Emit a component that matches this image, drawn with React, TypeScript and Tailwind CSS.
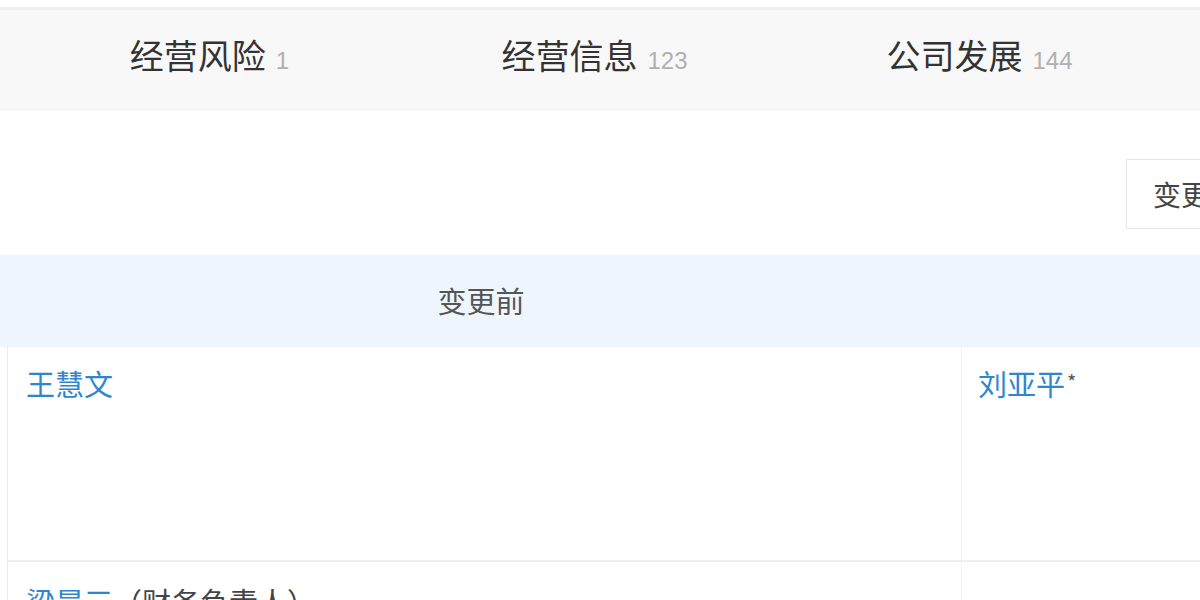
const FONT = "font-['Noto_Sans_CJK_SC','Noto_Sans',sans-serif]";

const TABS: Array<{ label: string; count: string }> = [
  { label: "经营风险", count: "1" },
  { label: "经营信息", count: "123" },
  { label: "公司发展", count: "144" },
];

export default function App() {
  return (
    <div className={`relative h-[600px] w-[1200px] overflow-hidden bg-white ${FONT}`}>
      <div className="h-[7px] bg-white" />
      <div className="flex h-[103px] items-center border-t-[3px] border-b border-t-[#f0f0f0] border-b-[#efefef] bg-[#f8f8f8] pb-[8px] pl-[17px]">
        {TABS.map((t) => (
          <div key={t.label} className="flex w-[385px] shrink-0 items-baseline justify-center">
            <span className="text-[34px] leading-none text-[#333]">{t.label}</span>
            <span className="ml-[10px] font-['Liberation_Sans',sans-serif] text-[24px] leading-none text-[#b0b0b0]">
              {t.count}
            </span>
          </div>
        ))}
      </div>

      <div className="flex h-[145px] items-center justify-end pt-[22px]">
        <button
          type="button"
          className="mr-[-40px] flex h-[70px] w-[114px] shrink-0 items-center whitespace-nowrap border border-[#e6e6e6] bg-white pl-[26px] text-[28px] text-[#444]"
        >
          变更信息
        </button>
      </div>

      <div className="flex h-[92px] bg-[#eef5fc]">
        <div className="flex w-[962px] shrink-0 items-center justify-center text-[29px] text-[#555]">变更前</div>
        <div className="flex w-[954px] shrink-0 items-center justify-center text-[29px] text-[#555]">变更后</div>
      </div>

      <div className="ml-[7px] border-l border-[#eaeaea]">
        <div className="flex h-[215px] border-b-2 border-[#f0f0f0]">
          <div className="w-[954px] shrink-0 border-r border-[#eef2f6] pl-[18px] pt-[15px] text-[29px] leading-[1.5] text-[#2f86cf]">
            王慧文
          </div>
          <div className="flex-1 pl-[16px] pt-[15px] text-[29px] leading-[1.5] text-[#2f86cf]">
            刘亚平<span className="relative top-[-6px] ml-[2px] text-[20px] text-[#555]">*</span>
          </div>
        </div>
        <div className="flex h-[100px]">
          <div className="w-[954px] shrink-0 whitespace-nowrap border-r border-[#eef2f6] pl-[18px] pt-[18px] text-[29px] leading-[1.5]">
            <span className="text-[#2f86cf]">梁晨三</span>
            <span className="text-[#444]">（财务负责人）</span>
          </div>
          <div className="flex-1" />
        </div>
      </div>
    </div>
  );
}
